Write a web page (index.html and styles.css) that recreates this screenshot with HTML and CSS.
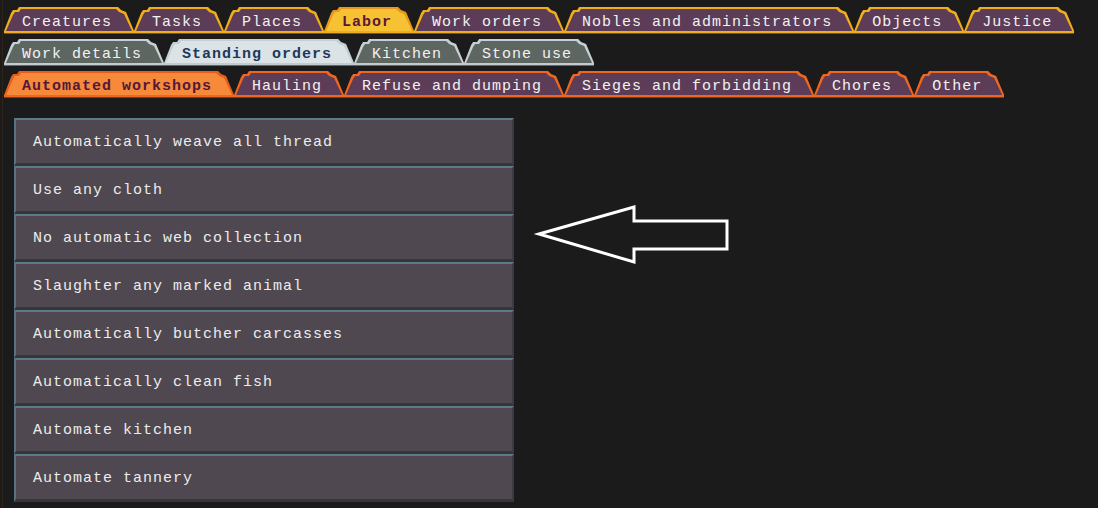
FILE: index.html
```html
<!DOCTYPE html>
<html>
  <head>
    <title>Standing orders</title>
    <link rel="stylesheet" href="styles.css">
  </head>
  <body>
    <div class="screen">
      <div class="tabs tabs-main">
        <span class="tab">Creatures</span>
        <span class="tab">Tasks</span>
        <span class="tab">Places</span>
        <span class="tab active">Labor</span>
        <span class="tab">Work orders</span>
        <span class="tab">Nobles and administrators</span>
        <span class="tab">Objects</span>
        <span class="tab">Justice</span>
      </div>
      <div class="tabs tabs-sub">
        <span class="tab">Work details</span>
        <span class="tab active">Standing orders</span>
        <span class="tab">Kitchen</span>
        <span class="tab">Stone use</span>
      </div>
      <div class="tabs tabs-cat">
        <span class="tab active">Automated workshops</span>
        <span class="tab">Hauling</span>
        <span class="tab">Refuse and dumping</span>
        <span class="tab">Sieges and forbidding</span>
        <span class="tab">Chores</span>
        <span class="tab">Other</span>
      </div>

      <div class="orders">
        <div class="order">Automatically weave all thread</div>
        <div class="order">Use any cloth</div>
        <div class="order">No automatic web collection</div>
        <div class="order">Slaughter any marked animal</div>
        <div class="order">Automatically butcher carcasses</div>
        <div class="order">Automatically clean fish</div>
        <div class="order">Automate kitchen</div>
        <div class="order">Automate tannery</div>
      </div>

      <!-- pointer drawn over the screenshot -->
      <svg class="pointer" viewBox="530 200 205 70" width="205" height="70">
        <path d="M539 234 L634 207 L634 221 L727 221 L727 249 L634 249 L634 262 Z"
          fill="none" stroke="#fff" stroke-width="3" stroke-linejoin="miter" />
      </svg>
    </div>
  </body>
</html>
```

FILE: styles.css
```css
body {
  margin: 0;
  background-color: #1b1b1b;
  font-family: "Liberation Mono", "DejaVu Sans Mono", monospace;
}

.screen {
  position: relative;
  min-height: 508px;
  box-sizing: border-box;
  margin-left: 2px;
  padding: 7px 0 0 1px;
  border-left: 1px solid #2e2419;
}

.tabs {
  display: flex;
  width: fit-content;
  margin-bottom: 6px;
  border-bottom: 2px solid var(--line);
  box-shadow: 0 1px 0 var(--line-dark);
}

.tab {
  position: relative;
  isolation: isolate;
  height: 24px;
  box-sizing: border-box;
  padding: 7px 22px 0 18px;
  font-size: 15px;
  line-height: 17px;
  letter-spacing: 1px;
  white-space: pre;
  color: #f2f2f2;
  background-color: var(--edge);
  clip-path: polygon(0 100%, 7px 6px, 9px 3px, 13px 3px, 15px 0, calc(100% - 16px) 0, calc(100% - 13px) 3px, calc(100% - 8px) 5px, 100% 100%);
}

.tab::before {
  content: "";
  position: absolute;
  top: 2px;
  left: 2px;
  right: 2px;
  bottom: 0;
  z-index: -1;
  background-color: var(--fill);
  clip-path: polygon(0 100%, 7px 6px, 9px 3px, 13px 3px, 15px 0, calc(100% - 16px) 0, calc(100% - 13px) 3px, calc(100% - 8px) 5px, 100% 100%);
}

.tab.active {
  font-weight: bold;
  color: var(--active-text);
  background-color: var(--active-edge);
}

.tab.active::before {
  background-color: var(--active-fill);
}

.tabs-main {
  --edge: #f0ae1c;
  --fill: #5c3c57;
  --line: #f0ae1c;
  --line-dark: #8c4a12;
  --active-edge: #e8981a;
  --active-fill: #f6c234;
  --active-text: #5a1838;
}

.tabs-sub {
  --edge: #c6cfd4;
  --fill: #5e6661;
  --line: #c2cbd0;
  --line-dark: #5f686c;
  --active-edge: #c6cfd4;
  --active-fill: #dce3e7;
  --active-text: #1b3a5a;
}

.tabs-cat {
  --edge: #ee6620;
  --fill: #5c3c57;
  --line: #ee6620;
  --line-dark: #8a3812;
  --active-edge: #e65e1c;
  --active-fill: #f68a3a;
  --active-text: #54183a;
}

.orders {
  margin-top: 21px;
  margin-left: 10px;
  width: 500px;
}

.order {
  display: flex;
  align-items: center;
  height: 48px;
  box-sizing: border-box;
  padding: 2px 0 0 17px;
  background-color: #4f4850;
  border-top: 2px solid #5c7b88;
  border-left: 2px solid #587482;
  border-right: 2px solid #3f3944;
  border-bottom: 3px solid #39333c;
  color: #ececec;
  font-size: 15px;
  line-height: 17px;
  letter-spacing: 1px;
  white-space: pre;
}

.pointer {
  position: absolute;
  left: 527px;
  top: 200px;
}
```
